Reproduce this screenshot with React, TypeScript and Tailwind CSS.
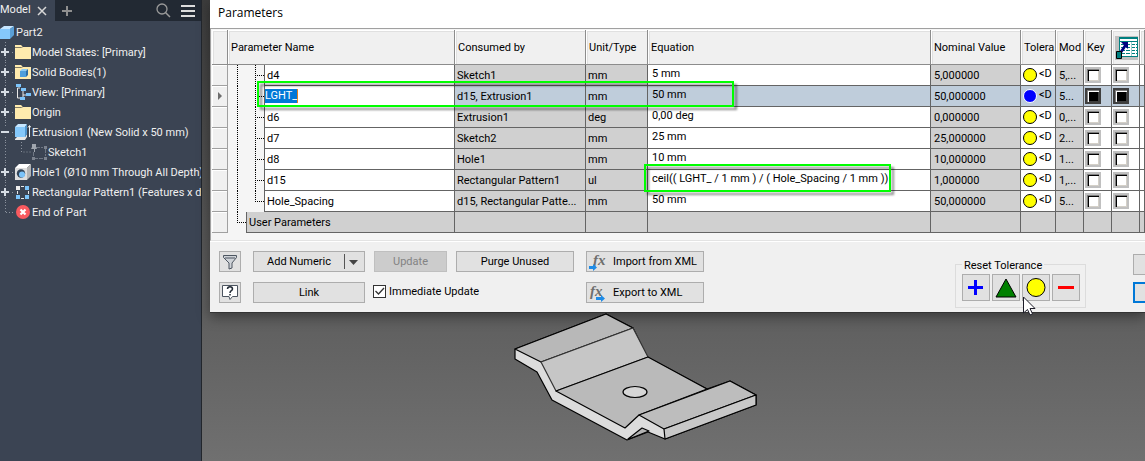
import { ReactNode } from "react"
import clsx from "clsx"

interface Param {
  name: string
  usedBy: string
  unit: string
  equation: string
  nominal: string
  model: string
}

const params: Param[] = [
  { name: "d4", usedBy: "Sketch1", unit: "mm", equation: "5 mm", nominal: "5,000000", model: "5,..." },
  { name: "LGHT_", usedBy: "d15, Extrusion1", unit: "mm", equation: "50 mm", nominal: "50,000000", model: "5..." },
  { name: "d6", usedBy: "Extrusion1", unit: "deg", equation: "0,00 deg", nominal: "0,000000", model: "0,..." },
  { name: "d7", usedBy: "Sketch2", unit: "mm", equation: "25 mm", nominal: "25,000000", model: "2..." },
  { name: "d8", usedBy: "Hole1", unit: "mm", equation: "10 mm", nominal: "10,000000", model: "1..." },
  {
    name: "d15",
    usedBy: "Rectangular Pattern1",
    unit: "ul",
    equation: "ceil(( LGHT_ / 1 mm ) / ( Hole_Spacing / 1 mm ))",
    nominal: "1,000000",
    model: "1,...",
  },
  { name: "Hole_Spacing", usedBy: "d15, Rectangular Patte...", unit: "mm", equation: "50 mm", nominal: "50,000000", model: "5..." },
]

function FolderIcon({ body }: { body?: boolean }) {
  return (
    <svg width="16" height="16" viewBox="0 0 16 16">
      <path d="M0 1h6l2 2h8v12H0z" fill="#ffebae" />
      <path d="M0 3.5h6.5l1.5-1" stroke="#7d7966" fill="none" />
      {body && (
        <>
          <path d="M5 7l2-2h6l-2 2z" fill="#8fcbf5" />
          <path d="M5 7h6v6H5z" fill="#4f9fdc" />
          <path d="M11 7l2-2v6l-2 2z" fill="#2f6fa6" />
        </>
      )}
    </svg>
  )
}

function CubeIcon() {
  return (
    <svg width="14" height="15" viewBox="0 0 14 15">
      <path d="M0 4l4-3h10l-4 3z" fill="#c6e6ff" />
      <path d="M0 4h10v10H0z" fill="#85c8fb" />
      <path d="M10 4l4-3v9l-4 4z" fill="#5a9fd6" />
    </svg>
  )
}

function ViewIcon() {
  return (
    <svg width="16" height="16" viewBox="0 0 16 16">
      <path d="M5 4H2.500v10H5M8 6v5h3M8 11v3" stroke="#e8e8e8" fill="none" />
      <path d="M1 0h5v3H1zM6 4h5v3H6zM11 9h5v3h-5zM5 13h5v3H5z" fill="#7cc4fa" />
    </svg>
  )
}

function ExtrusionIcon() {
  return (
    <svg width="16" height="16" viewBox="0 0 16 16">
      <path d="M0 15l2-2h8l2-3v3l-2 3H0z" fill="#e6e6e6" />
      <path d="M0 3l3-3h9l-2 3z" fill="#c6e6ff" />
      <path d="M0 3h10v10H0z" fill="#85c8fb" />
      <path d="M10 3l2-3v10l-2 3z" fill="#4f96d0" />
      <path d="M14.500 13V2M13 3.500l1.500-2 1.500 2" stroke="#f4f4f4" fill="none" />
    </svg>
  )
}

function SketchIcon() {
  return (
    <svg width="16" height="16" viewBox="0 0 16 16">
      <path d="M5 3.500h7M14.500 5v7M12 14.500H4M2.500 12V7" stroke="#6f7784" strokeDasharray="4 1" fill="none" />
      <path d="M1 13h3v3H1zM13 13h3v3h-3zM13 2h3v3h-3z" fill="#7b828e" />
      <path d="M1 0h4v3l1 2H4v3H3V5H0l1-2z" fill="#a0a6af" />
    </svg>
  )
}

function HoleIcon() {
  return (
    <svg width="16" height="16" viewBox="0 0 16 16">
      <path d="M0 4l4-4h12l-4 4z" fill="#ffffff" />
      <path d="M0 4h12v12H0z" fill="#dedede" />
      <path d="M12 4l4-4v12l-4 4z" fill="#b4b4b4" />
      <circle cx="6" cy="9.500" r="4.200" fill="#34465a" />
      <circle cx="7" cy="10.500" r="3" fill="#7cc4fa" />
    </svg>
  )
}

function PatternIcon() {
  return (
    <svg width="16" height="16" viewBox="0 0 16 16">
      <path d="M1 2h4v4H1z" fill="#eee" />
      <path d="M10 2h4v4h-4zM1 11h4v4H1zM10 11h4v4h-4z" fill="#7cc4fa" />
      <path d="M6 2.500h3M2.500 7v3M13.500 7v3M6 14.500h3" stroke="#e8e8e8" fill="none" />
    </svg>
  )
}

function EndIcon() {
  return (
    <svg width="16" height="16" viewBox="0 0 16 16">
      <circle cx="8" cy="8" r="7" fill="#f95a5f" />
      <path d="M5.500 5.500l5 5M10.500 5.500l-5 5" stroke="#fff" strokeWidth="2.200" />
    </svg>
  )
}

interface Node {
  label: string
  icon: ReactNode
  mark?: "+" | "-"
  child?: boolean
  last?: boolean
}

const nodes: Node[] = [
  { label: "Model States: [Primary]", icon: <FolderIcon />, mark: "+" },
  { label: "Solid Bodies(1)", icon: <FolderIcon body />, mark: "+" },
  { label: "View: [Primary]", icon: <ViewIcon />, mark: "+" },
  { label: "Origin", icon: <FolderIcon />, mark: "+" },
  { label: "Extrusion1 (New Solid x 50 mm)", icon: <ExtrusionIcon />, mark: "-" },
  { label: "Sketch1", icon: <SketchIcon />, child: true },
  { label: "Hole1 (Ø10 mm Through All Depth)", icon: <HoleIcon />, mark: "+" },
  { label: "Rectangular Pattern1 (Features x d", icon: <PatternIcon />, mark: "+" },
  { label: "End of Part", icon: <EndIcon />, last: true },
]

function TreeLines({ node }: { node: Node }) {
  return (
    <svg width={node.child ? 31 : 15} height="20" className="shrink-0">
      <g stroke="#8b929d" strokeDasharray="1 2" fill="none">
        <path d={node.last ? "M5.500 0V10" : "M5.500 0V20"} />
        <path d={node.child ? "M21.500 0V10H31" : "M6 10.500H15"} />
      </g>
      {node.mark && <path d="M0 6h10v8H0z" fill="#3b4453" />}
      {node.mark && <path d="M1 10h8" stroke="#d5dce4" strokeWidth="2" />}
      {node.mark === "+" && <path d="M5 6v8" stroke="#d5dce4" strokeWidth="2" />}
    </svg>
  )
}

function ModelBrowser() {
  return (
    <aside className="w-[202px] shrink-0 overflow-hidden border-r border-[#22262c] bg-[#3b4453] text-[#f0f0f0]">
      <header className="flex h-[21px] items-center bg-[#222933]">
        <div className="flex h-full w-[55px] items-center justify-between bg-[#3b4453] pr-2">
          <span>Model</span>
          <button aria-label="Close tab">
            <svg width="10" height="10" viewBox="0 0 10 10" className="block">
              <path d="M1 1l8 8M9 1L1 9" stroke="#d8d8d8" strokeWidth="1.500" />
            </svg>
          </button>
        </div>
        <button aria-label="Add tab" className="ml-[7px]">
          <svg width="10" height="10" viewBox="0 0 10 10" className="block">
            <path d="M5 0v10M0 5h10" stroke="#8f8f8f" strokeWidth="2" />
          </svg>
        </button>
        <button aria-label="Search" className="ml-auto">
          <svg width="15" height="15" viewBox="0 0 15 15" className="block">
            <circle cx="6" cy="6" r="5" stroke="#9a9a9a" strokeWidth="1.300" fill="none" />
            <path d="M9.500 9.500l4.500 4.500" stroke="#9a9a9a" strokeWidth="1.500" />
          </svg>
        </button>
        <button aria-label="Menu" className="mr-1.5 ml-2.5">
          <svg width="14" height="12" viewBox="0 0 14 12" className="block">
            <path d="M0 1h14M0 6h14M0 11h14" stroke="#dcdcdc" strokeWidth="2" />
          </svg>
        </button>
      </header>
      <ul className="pt-px whitespace-nowrap">
        <li className="flex h-5 items-center gap-0.5">
          <CubeIcon />
          <span className="pt-0.5">Part2</span>
        </li>
        {nodes.map((node) => (
          <li key={node.label} className="flex h-5 items-center">
            <TreeLines node={node} />
            <span className="mr-px shrink-0">{node.icon}</span>
            <span className="pt-0.5">{node.label}</span>
          </li>
        ))}
      </ul>
    </aside>
  )
}

function Th({ children, span }: { children?: ReactNode; span?: number }) {
  return (
    <th
      colSpan={span}
      className="h-[35px] overflow-hidden border-r border-b border-[#8c8c8c] bg-[#f0f0f0] p-0 pt-0.5 pl-[3px] text-left font-normal whitespace-nowrap shadow-[inset_1px_1px_#ffffff,inset_2px_2px_#e0e0e0]"
    >
      {children}
    </th>
  )
}

const cell = "overflow-hidden border-r border-b border-[#646464] whitespace-nowrap"
const text = "p-0 pt-0.5 leading-4"

function SelectorCell({ active }: { active?: boolean }) {
  return (
    <td className="h-[21px] border-r border-b border-[#a0a0a0] bg-[#f0f0f0] p-0 shadow-[inset_1px_1px_#ffffff]">
      {active && (
        <svg width="16" height="10" viewBox="0 0 16 10">
          <path d="M6 1l4 4-4 4z" fill="#6d6d6d" />
        </svg>
      )}
    </td>
  )
}

function GridCheckbox({ label, active }: { label: string; active: boolean }) {
  return (
    <input
      type="checkbox"
      aria-label={label}
      className={clsx(
        "block size-4 appearance-none border-2",
        active
          ? "border-[#3f3f3f] bg-black shadow-[inset_1px_1px_#7f7f7f,inset_2px_2px_#ffffff,inset_-1px_-1px_#3f3f3f]"
          : "border-[#c0c0c0] bg-white shadow-[inset_1px_1px_#808080,inset_2px_2px_#000000,inset_-1px_-1px_#d4d0c8]",
      )}
    />
  )
}

function ParamRow({ param, last }: { param: Param; last: boolean }) {
  const active = param.name === "LGHT_"
  const calc = active ? "bg-[#bfcddb]" : "bg-[#d0d0d0]"
  const edit = active ? "bg-[#bfcddb]" : "bg-white"

  return (
    <tr>
      <SelectorCell active={active} />
      <td className="p-0">
        <svg width="18" height="21" className="block">
          <path d="M9.500 0V21" stroke="#000" strokeDasharray="1 1" />
        </svg>
      </td>
      <td className="p-0">
        <svg width="18" height="21" className="block">
          <path d={last ? "M9.500 0V11M9 10.500H18" : "M9.500 0V21M9 10.500H18"} stroke="#000" strokeDasharray="1 1" />
        </svg>
      </td>
      <td className={clsx(cell, "border-l bg-white", active ? "p-0" : "p-0 pt-0.5 pl-0.5 leading-4")}>
        {active ? (
          <span className="block h-[14px] w-[33px] border-r border-[#e08020] bg-[#0078d7] leading-[14px] text-white">{param.name}</span>
        ) : (
          param.name
        )}
      </td>
      <td className={clsx(cell, text, calc, "pl-0.5")}>{param.usedBy}</td>
      <td className={clsx(cell, text, calc, "pl-0.5")}>{param.unit}</td>
      <td className={clsx(cell, edit, "p-0 pb-0.5 pl-1 leading-4")}>{param.equation}</td>
      <td className={clsx(cell, text, calc, "pl-[3px]")}>{param.nominal}</td>
      <td className={clsx(cell, edit, "p-0")}>
        <div className="flex items-center gap-0.5 pl-0.5">
          <svg width="14" height="14" viewBox="0 0 14 14" className="shrink-0">
            <circle cx="7" cy="7" r="6.500" fill={active ? "#0000ff" : "#ffff00"} stroke={active ? "#fff" : "#000"} />
          </svg>
          <span className="pb-0.5 leading-4">&lt;D</span>
        </div>
      </td>
      <td className={clsx(cell, text, calc, "pl-[3px]")}>{param.model}</td>
      <td className={clsx(cell, edit, "p-0 pl-px")}>
        <GridCheckbox label={`Key ${param.name}`} active={active} />
      </td>
      <td className={clsx(cell, edit, "p-0 pl-px")}>
        <GridCheckbox label={`Export ${param.name}`} active={active} />
      </td>
      <td className={clsx(cell, edit, "p-0")} />
    </tr>
  )
}

function ExportColumnIcon() {
  return (
    <svg width="23" height="24" viewBox="0 0 23 24">
      <path d="M0 0h23v24H0z" fill="#c0c0c0" />
      <path d="M4 1h19v20H4z" fill="#008080" />
      <path d="M5 3h17v2H5zM5 6h17v14H5z" fill="#fff" />
      <path d="M6 8.500h16M6 11.500h16M6 14.500h16M6 17.500h16" stroke="#008080" strokeDasharray="4 1" />
      <path d="M16.500 6v14" stroke="#9fd0d0" />
      <path d="M6 6h7v7l-2-2-4 6-2-2 4-6z" fill="#000080" />
      <path d="M1.500 15.500h5v7h-5z" fill="#008080" stroke="#000" />
    </svg>
  )
}

function ParameterGrid() {
  return (
    <div className="relative border-t border-b border-l border-[#a0a0a0] border-b-[#e3e3e3] bg-[#f5f5f5] pt-px pb-[7px] pl-px">
      <table className="w-full table-fixed border-separate border-spacing-0">
        <colgroup>
          <col className="w-4" />
          <col className="w-[18px]" />
          <col className="w-[18px]" />
          <col className="w-[191px]" />
          <col className="w-[131px]" />
          <col className="w-[62px]" />
          <col />
          <col className="w-[90px]" />
          <col className="w-[35px]" />
          <col className="w-7" />
          <col className="w-7" />
          <col className="w-7" />
          <col className="w-[5px]" />
        </colgroup>
        <thead>
          <tr>
            <Th />
            <Th span={3}>Parameter Name</Th>
            <Th>Consumed by</Th>
            <Th>Unit/Type</Th>
            <Th>Equation</Th>
            <Th>Nominal Value</Th>
            <Th>Tolera</Th>
            <Th>Mod</Th>
            <Th>Key</Th>
            <Th>
              <ExportColumnIcon />
            </Th>
            <Th />
          </tr>
        </thead>
        <tbody>
          {params.map((param, index) => (
            <ParamRow key={param.name} param={param} last={index === params.length - 1} />
          ))}
          <tr>
            <SelectorCell />
            <td className="p-0">
              <svg width="18" height="21" className="block">
                <path d="M9.500 0V11M9 10.500H18" stroke="#000" strokeDasharray="1 1" />
              </svg>
            </td>
            <td colSpan={2} className={clsx(cell, text, "border-l bg-[#d0d0d0] pl-0.5")}>
              User Parameters
            </td>
            {Array.from({ length: 9 }, (_, i) => (
              <td key={i} className={clsx(cell, "bg-[#d0d0d0] p-0")} />
            ))}
          </tr>
        </tbody>
      </table>
      <div className="pointer-events-none absolute top-[52px] left-[46px] h-[26px] w-[477px] border-2 border-[#00ff00] drop-shadow-[3px_3px_1px_rgba(0,0,0,0.45)]" />
      <div className="pointer-events-none absolute top-[135px] left-[433px] h-7 w-[247px] border-2 border-[#00ff00] drop-shadow-[3px_3px_1px_rgba(0,0,0,0.45)]" />
    </div>
  )
}

const button = "flex h-[21px] items-center justify-center border whitespace-nowrap"
const enabled = "border-[#adadad] bg-[#e1e1e1]"

function FxIcon({ out }: { out?: boolean }) {
  return (
    <svg width="18" height="18" viewBox="0 0 18 18">
      <text x={out ? 1 : 4} y="12" fontFamily="'Liberation Serif', serif" fontStyle="italic" fontWeight="bold" fontSize="15" fill="#6e6e6e">
        fx
      </text>
      <path d={out ? "M7 13h5v-2l4 3.500-4 3.500v-2H7z" : "M0 13h4v-2l4 3.500-4 3.500v-2H0z"} fill="#1e8be6" />
    </svg>
  )
}

function ResetTolerance() {
  const items = [
    { label: "Upper", icon: <path d="M12.500 5v15M5 12.500h15" stroke="#0000ff" strokeWidth="3" /> },
    { label: "Median", icon: <path d="M13 4L23 22H3z" fill="#008000" stroke="#000" /> },
    { label: "Nominal", icon: <circle cx="13" cy="12.500" r="9" fill="#ffff00" stroke="#000" /> },
    { label: "Lower", icon: <path d="M5 12.500h16" stroke="#ff0000" strokeWidth="3" /> },
  ]
  return (
    <fieldset className="relative mt-[22px] flex h-11 w-[131px] gap-0.5 border border-[#dcdcdc] pt-[9px] pl-1.5">
      <legend className="absolute -top-2 left-1.5 bg-[#f0f0f0] px-0.5 pt-px leading-4 whitespace-nowrap">Reset Tolerance</legend>
      {items.map((item) => (
        <button key={item.label} aria-label={item.label} className="h-[27px] w-7 border border-[#adadad] bg-[#e1e1e1]">
          <svg width="26" height="25" viewBox="0 0 26 25">
            {item.icon}
          </svg>
        </button>
      ))}
      <svg width="13" height="20" viewBox="0 0 13 20" className="absolute top-[31px] left-[67px]">
        <path d="M.500 1v16l4-3.500L7 19l2.500-1.200L7 12.500h5z" fill="#fff" stroke="#1c1c28" />
      </svg>
    </fieldset>
  )
}

function ParametersDialog() {
  return (
    <section className="relative ml-2 border-b border-[#333333] bg-[#f0f0f0] text-black shadow-[0_4px_12px_rgba(0,0,0,0.4)]">
      <h1 className="h-7 bg-white pt-1 pl-2 font-['Open_Sans',sans-serif] text-xs leading-[18px]">Parameters</h1>
      <ParameterGrid />
      <div className="flex h-[71px] items-start border-t border-white pl-[9px]">
        <div className="flex flex-col gap-2.5 pt-[9px]">
          <div className="flex">
            <button aria-label="Filter" className={clsx(button, enabled, "w-[22px]")}>
              <svg width="16" height="16" viewBox="0 0 16 16">
                <path d="M1.500 1.500h13v2L10 9v5l-3 1V9L1.500 3.500z" fill="#cfd3d8" stroke="#4c5560" />
                <path d="M3 4h10" stroke="#4c5560" />
              </svg>
            </button>
            <button className={clsx(button, enabled, "ml-3 w-28")}>
              <span className="flex-1 pt-0.5">Add Numeric</span>
              <svg width="20" height="15" viewBox="0 0 20 15">
                <path d="M.5 0v15" stroke="#555" />
                <path d="M5 6h9l-4.500 5z" fill="#444" />
              </svg>
            </button>
            <button disabled className={clsx(button, "ml-[9px] w-[73px] border-[#bfbfbf] bg-[#cccccc] pt-0.5 text-[#838383]")}>
              Update
            </button>
            <button className={clsx(button, enabled, "ml-[9px] w-[118px] pt-0.5")}>Purge Unused</button>
            <button className={clsx(button, enabled, "ml-3 w-[118px] justify-start pl-0.5")}>
              <FxIcon />
              <span className="ml-1.5 pt-0.5">Import from XML</span>
            </button>
          </div>
          <div className="flex">
            <button aria-label="Help" className={clsx(button, enabled, "w-[22px]")}>
              <svg width="18" height="17" viewBox="0 0 18 17">
                <path d="M1.500 1.500h15v11h-5L9 15.500l-1-3H1.500z" fill="#fff" stroke="#4c5560" />
                <path d="M6.500 5c0-3 5-3 5 0 0 2-2.500 1.500-2.500 4M9 10v1.500" stroke="#222b36" strokeWidth="1.500" fill="none" />
              </svg>
            </button>
            <button className={clsx(button, enabled, "ml-3 w-28 pt-0.5")}>Link</button>
            <label className="ml-2 flex h-[19px] w-[201px] items-center gap-[3px]">
              <input type="checkbox" defaultChecked className="peer size-[13px] appearance-none border border-[#333333] bg-white" />
              <svg width="13" height="13" viewBox="0 0 13 13" className="-ml-4 hidden peer-checked:block">
                <path d="M2.500 6l3 3 5.500-6" stroke="#333" strokeWidth="1.300" fill="none" />
              </svg>
              <span className="pt-0.5">Immediate Update</span>
            </label>
            <button className={clsx(button, enabled, "ml-3 w-[118px] justify-start pl-0.5")}>
              <FxIcon out />
              <span className="ml-1.5 pt-0.5">Export to XML</span>
            </button>
          </div>
        </div>
        <div className="ml-auto flex gap-[47px]">
          <ResetTolerance />
          <div className="flex w-3 flex-col gap-[7px] pt-3">
            <button aria-label="Less" className="h-[21px] border border-r-0 border-[#adadad] bg-[#e1e1e1]" />
            <button aria-label="Done" className="h-[21px] border-2 border-r-0 border-[#0078d7] bg-[#e1e1e1]" />
          </div>
        </div>
      </div>
    </section>
  )
}

function Bracket() {
  return (
    <svg width="246" height="128" viewBox="0 0 246 128" className="relative ml-[312px]">
      <g stroke="#000" strokeWidth="1.200" strokeLinejoin="round">
        <path d="M1 36L92 1l27 14 14 29 60 32 23-8 26 14v10l-91 34-17-7-21 8-75-40-15-28L1 46z" fill="#dcdcdc" />
        <path d="M1 36L92 1l27 14-92 34z" fill="#b8b8b8" />
        <path d="M119 15l15 29-92 34-15-29z" fill="#c6c6c6" stroke="#333" />
        <path d="M134 44l59 32-68 26-14 13-69-37z" fill="#bababa" />
        <path d="M125 102l91-34 26 14-92 34z" fill="#bdbdbd" />
        <path d="M150 116l92-34v10l-91 34z" fill="#c8c8c8" />
        <path d="M114 126l14-11 7 3-20 8z" fill="#b5b5b5" />
        <ellipse cx="121" cy="79" rx="12" ry="5.500" fill="#d6d6d6" />
      </g>
    </svg>
  )
}

export default function App() {
  return (
    <div className="flex min-h-screen overflow-hidden font-['Roboto',sans-serif] text-[11px]">
      <ModelBrowser />
      <main className="min-w-0 flex-1 bg-linear-to-b from-[#3c3c3c] to-[#707070]">
        <ParametersDialog />
        <Bracket />
      </main>
    </div>
  )
}
